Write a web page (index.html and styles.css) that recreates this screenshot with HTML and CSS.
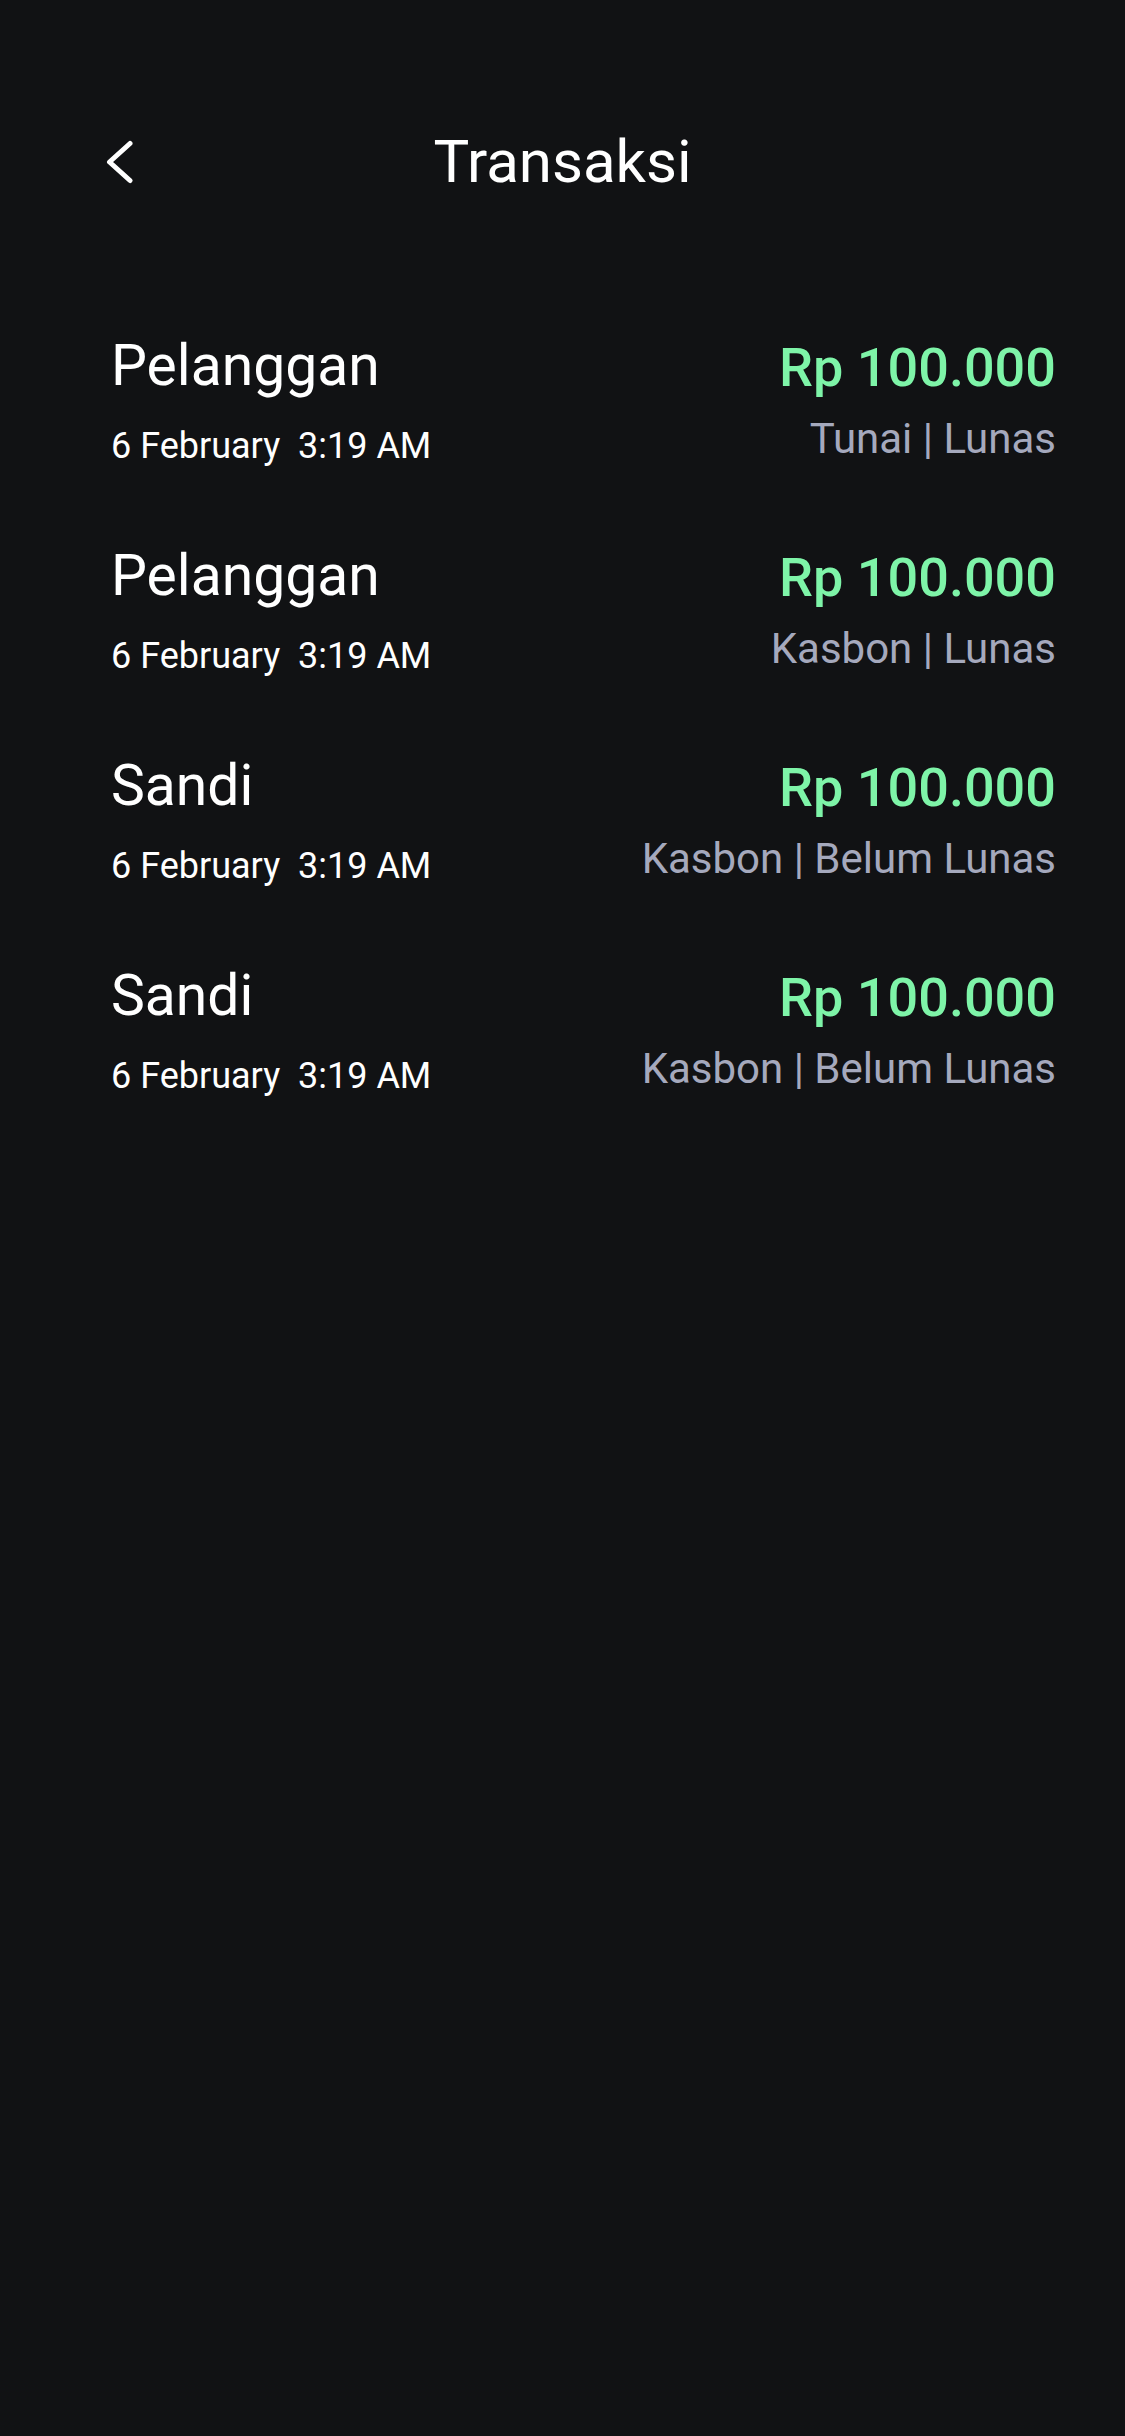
FILE: index.html
```html
<!DOCTYPE html>
<html lang="id">
<head>
<meta charset="utf-8">
<title>Transaksi</title>
<link rel="stylesheet" href="styles.css">
</head>
<body>
<div class="screen">
  <header class="header">
    <div class="back">
      <svg width="30" height="45" viewBox="0 0 30 45" aria-hidden="true">
        <polyline points="25,3.5 4.5,22 25,40.5" fill="none" stroke="#ffffff" stroke-width="5" stroke-linecap="round" stroke-linejoin="round"/>
      </svg>
    </div>
    <h1 class="title">Transaksi</h1>
    <div></div>
  </header>
  <main class="list">
    <div class="row">
      <div class="left">
        <div class="name">Pelanggan</div>
        <div class="date">6 February  3:19 AM</div>
      </div>
      <div class="right">
        <div class="amount">Rp 100.000</div>
        <div class="status">Tunai | Lunas</div>
      </div>
    </div>
    <div class="row">
      <div class="left">
        <div class="name">Pelanggan</div>
        <div class="date">6 February  3:19 AM</div>
      </div>
      <div class="right">
        <div class="amount">Rp 100.000</div>
        <div class="status">Kasbon | Lunas</div>
      </div>
    </div>
    <div class="row">
      <div class="left">
        <div class="name">Sandi</div>
        <div class="date">6 February  3:19 AM</div>
      </div>
      <div class="right">
        <div class="amount">Rp 100.000</div>
        <div class="status">Kasbon | Belum Lunas</div>
      </div>
    </div>
    <div class="row">
      <div class="left">
        <div class="name">Sandi</div>
        <div class="date">6 February  3:19 AM</div>
      </div>
      <div class="right">
        <div class="amount">Rp 100.000</div>
        <div class="status">Kasbon | Belum Lunas</div>
      </div>
    </div>
  </main>
</div>
</body>
</html>
```

FILE: styles.css
```css
html, body {
  margin: 0;
  padding: 0;
  background: #111214;
}

body {
  font-family: Roboto, "Noto Sans", "Liberation Sans", sans-serif;
  color: #ffffff;
  width: 1125px;
  min-height: 2436px;
}

.screen {
  min-height: 2436px;
  background: #111214;
}

.header {
  display: grid;
  grid-template-columns: 1fr auto 1fr;
  align-items: center;
  height: 140px;
  padding-top: 92px;
  box-sizing: content-box;
}

.back {
  display: flex;
  align-items: center;
  padding-left: 105px;
}

.back svg {
  display: block;
}

.title {
  margin: 0;
  font-size: 60px;
  line-height: 70px;
  font-weight: 400;
  color: #ffffff;
}

.list {
  display: flex;
  flex-direction: column;
  gap: 73px;
  padding: 99px 69px 0 111px;
}

.row {
  display: flex;
  justify-content: space-between;
  align-items: flex-start;
}

.left {
  display: flex;
  flex-direction: column;
  gap: 23px;
}

.name {
  font-size: 57px;
  line-height: 70px;
  font-weight: 400;
  color: #ffffff;
}

.date {
  font-size: 36px;
  line-height: 44px;
  white-space: pre;
  color: #ffffff;
}

.right {
  display: flex;
  flex-direction: column;
  align-items: flex-end;
  gap: 16px;
  margin-top: 7px;
}

.amount {
  font-size: 54px;
  line-height: 60px;
  font-weight: 500;
  color: #7ef4a8;
}

.status {
  font-size: 42px;
  line-height: 50px;
  color: #a5a9bd;
}
```
